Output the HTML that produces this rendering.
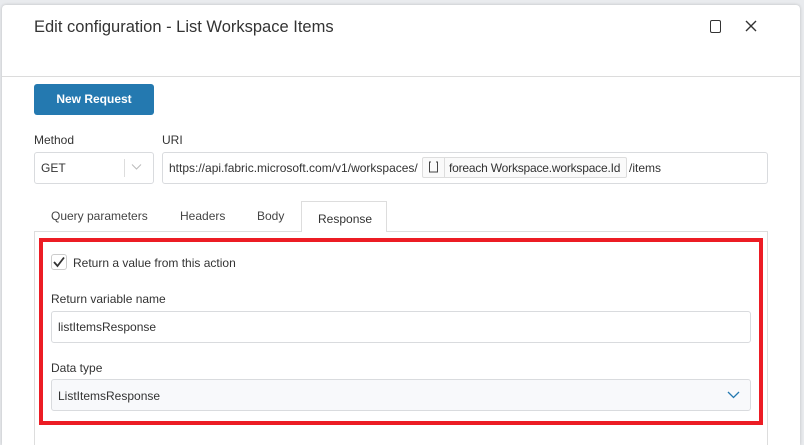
<!DOCTYPE html>
<html style="overflow:hidden;height:445px"><head><style>
body{margin:0;width:804px;height:445px;background:#e9ebee;font-family:"Liberation Sans",sans-serif;position:relative;overflow:hidden;color:#333}
.d{position:absolute;left:2px;top:5px;width:798px;height:440px;background:#fff;border-radius:4px 4px 0 0;box-shadow:0 0 3px rgba(0,0,0,.2)}
.a{position:absolute}
.t{font-size:12px;color:#333}
.box{position:absolute;border:1px solid #d9dbde;border-radius:3px;background:#fff;box-sizing:border-box}
</style></head><body>
<div class="d"></div>
<div class="a" style="left:34px;top:18px;font-size:16.5px;color:#333">Edit configuration - List Workspace Items</div>
<div class="a" style="left:2px;top:76px;width:798px;height:1px;background:#dcdcdc"></div>
<div class="a" style="left:710px;top:20px;width:11px;height:13px;border:1.5px solid #333;border-radius:2px;box-sizing:border-box"></div>
<svg class="a" style="left:745px;top:20px" width="12" height="12"><path d="M1 1L11 11M11 1L1 11" stroke="#333" stroke-width="1.4"/></svg>
<div class="a" style="left:34px;top:84px;width:120px;height:31px;background:#2479b0;border-radius:3px;color:#fff;font-size:12px;font-weight:bold;text-align:center;line-height:31px">New Request</div>
<div class="a t" style="left:34px;top:133px">Method</div>
<div class="a t" style="left:162px;top:133px">URI</div>
<div class="box" style="left:34px;top:152px;width:120px;height:32px"></div>
<div class="a t" style="left:41px;top:161px">GET</div>
<div class="a" style="left:124px;top:159px;width:1px;height:18px;background:#ddd"></div>
<svg class="a" style="left:131px;top:163px" width="11" height="8"><path d="M1 1.5L5.5 6L10 1.5" stroke="#bbb" fill="none"/></svg>
<div class="box" style="left:162px;top:152px;width:606px;height:32px"></div>
<div class="a t" style="left:169px;top:161px;white-space:nowrap">https://api.fabric.microsoft.com/v1/workspaces/</div>
<div class="a" style="left:422px;top:157px;width:205px;height:21px;border:1px solid #ddd;border-radius:2px;box-sizing:border-box;background:#fafafa"></div>
<div class="a" style="left:444px;top:158px;width:1px;height:19px;background:#ddd"></div>
<svg class="a" style="left:428px;top:161px" width="11" height="12"><path d="M3 1H1.5V11H9.5V1H8" stroke="#444" fill="none"/></svg>
<div class="a t" style="left:449px;top:161px;white-space:nowrap;letter-spacing:-0.2px">foreach Workspace.workspace.Id</div>
<div class="a t" style="left:629px;top:161px">/items</div>
<div class="a t" style="left:51px;top:209px;color:#444">Query parameters</div>
<div class="a t" style="left:180px;top:209px;color:#444">Headers</div>
<div class="a t" style="left:257px;top:209px;color:#444">Body</div>
<div class="a" style="left:301px;top:201px;width:86px;height:31px;border:1px solid #ddd;border-bottom:none;box-sizing:border-box;background:#fff"></div>
<div class="a t" style="left:318px;top:212px">Response</div>
<div class="a" style="left:34px;top:231px;width:734px;height:230px;border:1px solid #ddd;border-top:none;box-sizing:border-box"></div>
<div class="a" style="left:34px;top:231px;width:267px;height:1px;background:#ddd"></div>
<div class="a" style="left:387px;top:231px;width:381px;height:1px;background:#ddd"></div>
<div class="a" style="left:39px;top:238px;width:724px;height:187px;border:4px solid #ec1c24;box-sizing:border-box"></div>
<div class="a" style="left:51px;top:254px;width:16px;height:16px;border:1px solid #ccc;border-radius:3px;box-sizing:border-box"></div>
<svg class="a" style="left:52px;top:256px" width="14" height="12"><path d="M2 6L5.5 10L12 1.5" stroke="#333" stroke-width="1.8" fill="none"/></svg>
<div class="a t" style="left:73px;top:256px">Return a value from this action</div>
<div class="a t" style="left:51px;top:292px">Return variable name</div>
<div class="box" style="left:51px;top:311px;width:700px;height:32px"></div>
<div class="a t" style="left:58px;top:320px">listItemsResponse</div>
<div class="a t" style="left:51px;top:361px">Data type</div>
<div class="box" style="left:51px;top:379px;width:700px;height:32px;background:#f8f9fb"></div>
<div class="a t" style="left:58px;top:389px">ListItemsResponse</div>
<svg class="a" style="left:727px;top:391px" width="13" height="8"><path d="M1 1L6.5 6.5L12 1" stroke="#2479b0" stroke-width="1.3" fill="none"/></svg>
</body></html>
